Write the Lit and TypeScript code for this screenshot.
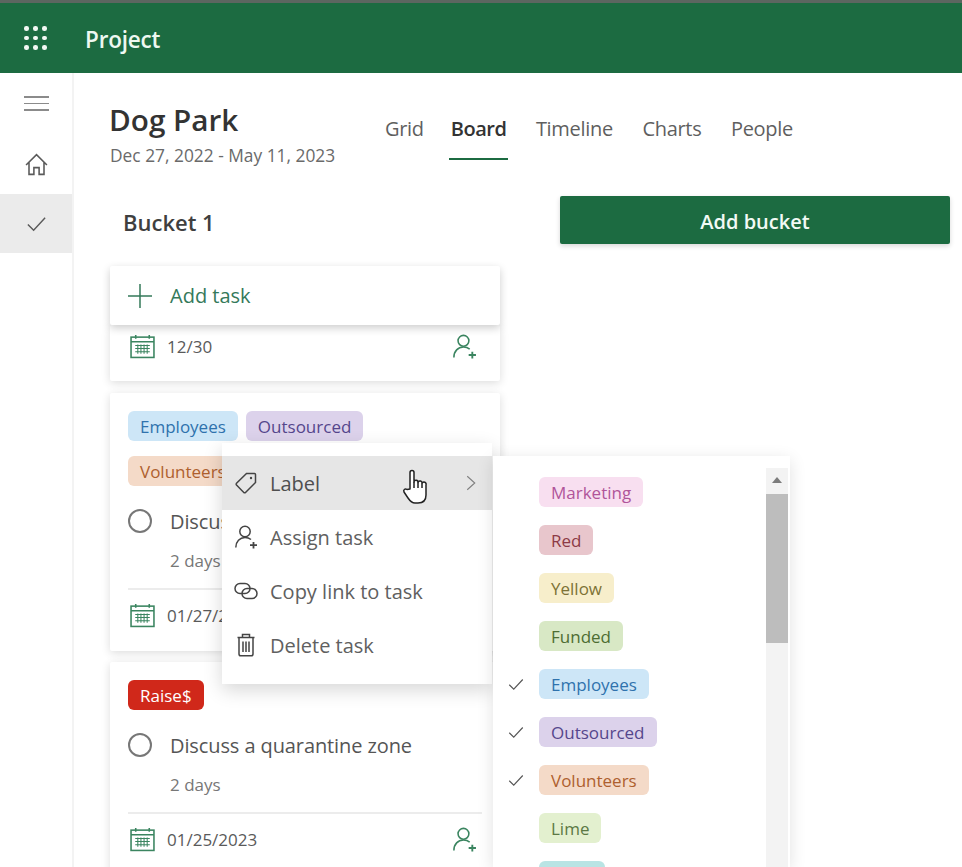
import { LitElement, html, css, svg } from 'lit';
import { customElement } from 'lit/decorators.js';

const icon = (size: number, body: unknown, cls = '') => html`<svg class=${cls} width=${size} height=${size} viewBox="0 0 24 24" fill="none" stroke="currentColor" stroke-width="1.5">${body}</svg>`;

const calendar = svg`<rect x="1" y="3" width="22" height="19.5"/><path d="M1 7.500h22M5.500 1v3.500M18.500 1v3.500"/><path d="M5 11h14M5 14h14M5 17h14M7.500 10v9M10.500 10v9M13.500 10v9M16.500 10v9" stroke-width="1"/>`;
const personAdd = svg`<circle cx="11" cy="6.500" r="5.200"/><path d="M1.800 22.500c0-6 4-10 9.200-10 2.500 0 4.500.8 6 2"/><path d="M19.500 17v6.500M16 20.200h7" stroke-width="1.800"/>`;
const tag = svg`<path d="M12.500 2.500H20.500a1 1 0 0 1 1 1V11.500L11.500 21.500a1.200 1.200 0 0 1-1.700 0L2.500 14a1.200 1.200 0 0 1 0-1.700Z"/><circle cx="17" cy="7" r="1.200" fill="currentColor" stroke="none"/>`;
const link = svg`<rect x="1" y="4.500" width="15" height="10" rx="5"/><rect x="8" y="9.500" width="15" height="10" rx="5"/>`;
const trash = svg`<path d="M3.500 4.500h17M8.500 4.500V1.500h7v3M5 4.500V21a1.800 1.800 0 0 0 1.800 1.800h10.400A1.800 1.800 0 0 0 19 21V4.500"/><path d="M9 8.500v10.500M12 8.500v10.500M15 8.500v10.500"/>`;
const check = svg`<path d="M3 13l6 6L21 6"/>`;
const home = svg`<path d="M2 12.500 12 2.500l10 10M4.800 10v11.500H9.500V15h5v6.500h4.700V10"/>`;

@customElement('app-root')
export class AppRoot extends LitElement {
  static styles = css`
    :host {
      display: block;
      position: relative;
      width: 962px;
      height: 867px;
      overflow: hidden;
      background: #fff;
      font-family: "Open Sans", "Noto Sans", sans-serif;
      color: #4a4a4a;
    }
    .topbar {
      height: 70px;
      border-top: 3px solid #5c6660;
      background: #1c6b41;
      display: flex;
      align-items: center;
      color: #eef8f1;
    }
    .waffle {
      margin-left: 24px;
      width: 24px;
      display: grid;
      grid-template-columns: repeat(3, 4px);
      gap: 5px;
    }
    .waffle i { width: 4.500px; height: 4.500px; border-radius: 50%; background: #f3f8f4; }
    .product { margin-left: 37px; padding-top: 2px; font-size: 22.500px; font-weight: 600; letter-spacing: -0.2px; }
    .shell { display: flex; height: 794px; }
    .sidebar {
      width: 72px;
      border-right: 2px solid #f3f3f3;
      flex: none;
      display: flex;
      flex-direction: column;
      color: #5a5a5a;
    }
    .burger { height: 61px; display: flex; flex-direction: column; gap: 5px; align-items: center; padding-top: 23px; box-sizing: border-box; }
    .burger i { width: 25px; height: 1.500px; background: #8b8b8b; }
    .nav { height: 60px; display: flex; align-items: center; justify-content: center; }
    .nav.active { background: #ebebeb; height: 59px; }
    .main { flex: 1; padding: 29px 0 0 36px; min-width: 0; }
    .head { display: flex; align-items: flex-start; }
    .title-block { width: 273px; flex: none; }
    h1 { margin: 0 0 0 -1px; font-size: 29.700px; line-height: 36px; font-weight: 600; color: #333; }
    .dates { margin-top: 6px; font-size: 17.350px; line-height: 22px; color: #6a6a6a; }
    .tabs { display: flex; gap: 25.500px; margin-top: 13px; }
    .tab { font-size: 20px; line-height: 28px; padding: 0 2px 15px; letter-spacing: -0.3px; color: #5f5f5f; border-bottom: 2px solid transparent; }
    .tab:first-child { margin-right: -2.500px; }
    .tab.active { color: #333; font-weight: 600; letter-spacing: -0.5px; border-bottom-color: #1c6b41; }
    .board { display: grid; grid-template-columns: 390px 390px; gap: 60px; margin-top: 30px; }
    .bucket-title { height: 70px; padding: 11px 0 0 13px; box-sizing: border-box; font-size: 22px; line-height: 30px; font-weight: 600; color: #3f3f3f; }
    .add-bucket {
      height: 48px;
      padding-top: 2px;
      box-sizing: border-box;
      background: #1c6b41;
      border-radius: 2px;
      color: #f2faf5;
      font-size: 20px;
      font-weight: 600;
      display: flex;
      align-items: center;
      justify-content: center;
      box-shadow: 0 2px 5px rgba(0, 0, 0, 0.16);
    }
    .add-task {
      position: relative;
      z-index: 1;
      height: 59px;
      background: #fff;
      border-radius: 2px;
      display: flex;
      align-items: center;
      padding-left: 18px;
      gap: 18px;
      color: #34795a;
      font-size: 20px;
      box-shadow: 0 3px 9px rgba(0, 0, 0, 0.2);
    }
    .card {
      background: #fff;
      border-radius: 2px;
      padding: 18px 18px 0;
      box-shadow: 0 2px 10px rgba(0, 0, 0, 0.14);
      margin-bottom: 11px;
    }
    .card:last-child { padding-bottom: 20px; }
    .card.stub { padding-top: 0; height: 56px; margin-bottom: 12px; }
    .card.second { height: 240px; }
    .tags { display: flex; flex-wrap: wrap; gap: 15px 8px; padding-right: 60px; }
    .pill {
      height: 30px;
      padding: 0 12px;
      border-radius: 6px;
      display: inline-flex;
      align-items: center;
      font-size: 17px;
      letter-spacing: 0;
      white-space: nowrap;
      box-sizing: border-box;
    }
    .employees { background: #cde6f7; color: #2f72ad; }
    .outsourced { background: #dcd2eb; color: #55468c; }
    .volunteers { background: #f4dac8; color: #ae602e; }
    .raise { background: #d0281a; color: #fff; font-weight: 500; }
    .marketing { background: #f8dff0; color: #b0559a; }
    .red { background: #e8c6cc; color: #8d3a45; }
    .yellow { background: #f7eecb; color: #7d7236; }
    .funded { background: #d8e8c5; color: #4d6d32; }
    .lime { background: #e3f0cf; color: #5b7844; }
    .teal { background: #b9e4e4; width: 66px; }
    .task { display: flex; align-items: center; gap: 18px; margin-top: 20px; height: 30px; font-size: 20px; letter-spacing: -0.1px; color: #555; }
    .circle { width: 24px; height: 24px; box-sizing: border-box; border: 2px solid #777; border-radius: 50%; flex: none; }
    .duration { margin: 13px 0 0 42px; font-size: 17px; line-height: 24px; color: #777; }
    .rule { height: 2px; background: #ececec; margin-top: 15px; }
    .foot { display: flex; align-items: center; height: 51px; font-size: 17px; color: #5a5a5a; }
    .stub .foot { height: 42px; }
    .cal { color: #3b8560; margin: 0 12px 0 2px; flex: none; }
    .assign { color: #3b8560; margin-left: auto; margin-right: 5px; flex: none; }
    .menu {
      position: absolute;
      left: 222px;
      top: 443px;
      width: 270px;
      height: 241px;
      background: #fff;
      padding-top: 13px;
      box-sizing: border-box;
      box-shadow: 0 6px 18px rgba(0, 0, 0, 0.16);
      z-index: 2;
    }
    .item {
      position: relative;
      height: 54px;
      display: flex;
      align-items: center;
      padding-left: 12px;
      gap: 12px;
      font-size: 20px;
      color: #606060;
    }
    .item svg { flex: none; color: #444; }
    .item.active { background: #e6e6e6; color: #4f4f4f; }
    .item svg.chevron { position: absolute; right: 12px; color: #808080; }
    .hand { position: absolute; left: 180px; top: 13px; }
    .submenu {
      position: absolute;
      left: 493px;
      top: 456px;
      width: 297px;
      height: 411px;
      background: #fff;
      padding-top: 12px;
      box-sizing: border-box;
      box-shadow: 0 4px 16px rgba(0, 0, 0, 0.12);
      z-index: 2;
      overflow: hidden;
    }
    .option { height: 48px; display: flex; align-items: center; padding-left: 46px; position: relative; }
    .option svg { position: absolute; left: 14px; color: #555; }
    .scroll {
      position: absolute;
      right: 2px;
      top: 12px;
      bottom: 0;
      width: 22px;
      background: #f3f3f3;
    }
    .arrow {
      position: absolute;
      top: 9px;
      left: 6px;
      width: 0;
      height: 0;
      border: 5px solid transparent;
      border-top: 0;
      border-bottom: 6px solid #7c7c7c;
    }
    .thumb { position: absolute; top: 26px; left: 0; right: 0; height: 149px; background: #bdbdbd; }
  `;

  private foot(date: string) {
    return html`<div class="foot">
      ${icon(25, calendar, 'cal')}<span>${date}</span>${icon(25, personAdd, 'assign')}
    </div>`;
  }

  protected render() {
    const options: [string, string, boolean][] = [
      ['Marketing', 'marketing', false],
      ['Red', 'red', false],
      ['Yellow', 'yellow', false],
      ['Funded', 'funded', false],
      ['Employees', 'employees', true],
      ['Outsourced', 'outsourced', true],
      ['Volunteers', 'volunteers', true],
      ['Lime', 'lime', false],
      ['', 'teal', false],
    ];
    return html`
      <div class="topbar">
        <div class="waffle">${Array.from({ length: 9 }, () => html`<i></i>`)}</div>
        <div class="product">Project</div>
      </div>
      <div class="shell">
        <nav class="sidebar">
          <div class="burger"><i></i><i></i><i></i></div>
          <div class="nav">${icon(25, home)}</div>
          <div class="nav active">${icon(23, check)}</div>
        </nav>
        <main class="main">
          <div class="head">
            <div class="title-block">
              <h1>Dog Park</h1>
              <div class="dates">Dec 27, 2022 - May 11, 2023</div>
            </div>
            <div class="tabs">
              ${['Grid', 'Board', 'Timeline', 'Charts', 'People'].map(
                (t) => html`<div class="tab ${t === 'Board' ? 'active' : ''}">${t}</div>`,
              )}
            </div>
          </div>
          <div class="board">
            <section>
              <div class="bucket-title">Bucket 1</div>
              <div class="add-task">${icon(24, svg`<path d="M12 0v24M0 12h24"/>`)}<span>Add task</span></div>
              <div class="card stub">${this.foot('12/30')}</div>
              <div class="card second">
                <div class="tags">
                  <span class="pill employees">Employees</span>
                  <span class="pill outsourced">Outsourced</span>
                  <span class="pill volunteers">Volunteers</span>
                </div>
                <div class="task"><span class="circle"></span><span>Discuss</span></div>
                <div class="duration">2 days</div>
                <div class="rule"></div>
                ${this.foot('01/27/2023')}
              </div>
              <div class="card">
                <div class="tags"><span class="pill raise">Raise$</span></div>
                <div class="task"><span class="circle"></span><span>Discuss a quarantine zone</span></div>
                <div class="duration">2 days</div>
                <div class="rule"></div>
                ${this.foot('01/25/2023')}
              </div>
            </section>
            <section><div class="add-bucket">Add bucket</div></section>
          </div>
        </main>
      </div>

      <div class="menu">
        <div class="item active">
          ${icon(24, tag)}<span>Label</span>
          <svg class="hand" width="26" height="36" viewBox="0 0 26 36" fill="#fff" stroke="#222" stroke-width="1.500" stroke-linejoin="round">
            <path d="M8 20V3.500a2 2 0 0 1 4 0V13a2 2 0 0 1 4 .5 2 2 0 0 1 4 1 2 2 0 0 1 4 1.500v10c0 5-3 8-8 8h-3c-3 0-5-2-7-5l-4-6c-1-2 1-4 3-2.500Z"/>
            <path d="M12 13v6M16 13.500V19M20 14.500V19" fill="none"/>
          </svg>
          ${icon(18, svg`<path d="M7 3l10 9-10 9"/>`, 'chevron')}
        </div>
        <div class="item">${icon(24, personAdd)}<span>Assign task</span></div>
        <div class="item">${icon(24, link)}<span>Copy link to task</span></div>
        <div class="item">${icon(24, trash)}<span>Delete task</span></div>
      </div>

      <div class="submenu">
        ${options.map(
          ([label, cls, on]) => html`<div class="option">
            ${on ? icon(18, check) : ''}
            <span class="pill ${cls}">${label}</span>
          </div>`,
        )}
        <div class="scroll"><span class="arrow"></span><span class="thumb"></span></div>
      </div>
    `;
  }
}
